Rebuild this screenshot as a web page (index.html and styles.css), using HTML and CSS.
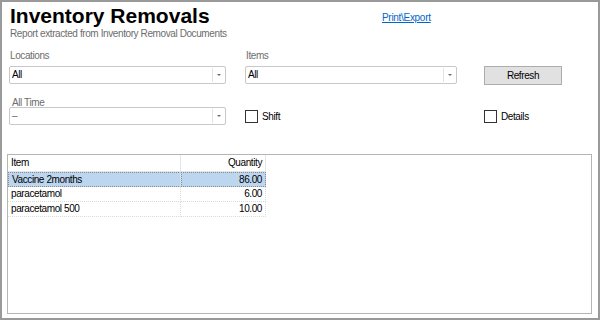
FILE: index.html
```html
<!DOCTYPE html>
<html>
<head>
<meta charset="utf-8">
<link rel="stylesheet" href="styles.css">
</head>
<body>
<div class="window">
  <div class="head">
    <div class="titles">
      <div class="title">Inventory Removals</div>
      <div class="subtitle">Report extracted from Inventory Removal Documents</div>
    </div>
    <a class="link" href="#">Print\Export</a>
  </div>
  <div class="form">
    <div class="label">Locations</div>
    <div class="label">Items</div>
    <div></div>
    <div class="combo"><span class="val">All</span><span class="arrow"><span class="tri"></span></span></div>
    <div class="combo"><span class="val">All</span><span class="arrow"><span class="tri"></span></span></div>
    <div class="button">Refresh</div>
    <div class="label label2">All Time</div>
    <div></div>
    <div></div>
    <div class="combo"><span class="val dim">–</span><span class="arrow"><span class="tri"></span></span></div>
    <div class="check"><span class="box"></span>Shift</div>
    <div class="check"><span class="box"></span>Details</div>
  </div>
  <div class="grid">
    <div class="table">
      <div class="row hdr"><div class="c1">Item</div><div class="c2">Quantity</div></div>
      <div class="row sel"><div class="c1">Vaccine 2months</div><div class="c2">86.00</div></div>
      <div class="row"><div class="c1">paracetamol</div><div class="c2">6.00</div></div>
      <div class="row"><div class="c1">paracetamol 500</div><div class="c2">10.00</div></div>
    </div>
  </div>
</div>
</body>
</html>
```
FILE: styles.css
```css
html, body { margin: 0; padding: 0; background: #fff; }
body { font-family: "Liberation Sans", Arial, sans-serif; font-size: 10px; letter-spacing: -0.4px; color: #000; }
.window {
  width: 600px; height: 320px; box-sizing: border-box;
  border: 2px solid #9a9a9a;
  padding: 0 5px 4px 5px;
  display: flex; flex-direction: column;
}
.head { display: flex; align-items: flex-start; padding-left: 3px; }
.titles { width: 372px; }
.title { font-size: 21px; font-weight: bold; line-height: 22px; margin-top: 3px; letter-spacing: 0; }
.subtitle { color: #6d6d6d; line-height: 13px; margin-top: 0px; }
.link { color: #0066cc; text-decoration: underline; line-height: 13px; margin-top: 9px; letter-spacing: -0.3px; }
.form {
  display: grid;
  grid-template-columns: 217px 212px 86px;
  column-gap: 19px;
  padding-left: 2px;
  margin-top: 9px;
}
.form > :nth-child(3n+3) { margin-left: 8px; }
.label { color: #6d6d6d; line-height: 13px; height: 17px; padding-left: 1px; }
.label2 { padding-left: 3px; margin-top: 11px; height: 11px; }
.combo {
  height: 18px; box-sizing: border-box; border: 1px solid #c8c8c8; border-radius: 2px;
  display: flex; align-items: center; background: #fff;
}
.val { flex: 1; padding-left: 2px; line-height: 14px; }
.dim { color: #6d6d6d; }
.arrow { width: 12px; height: 14px; border-left: 1px solid #e3e3e3; display: flex; align-items: center; justify-content: center; }
.tri { width: 0; height: 0; border-left: 2px solid transparent; border-right: 2px solid transparent; border-top: 2px solid #6d6d6d; }
.button {
  height: 19px; box-sizing: border-box; background: #e1e1e1; border: 1px solid #adadad;
  display: flex; align-items: center; justify-content: center;
}
.check { display: flex; align-items: center; height: 18px; margin-top: 0; }
.box { width: 11px; height: 11px; border: 1px solid #333; margin-right: 4px; background: #fff; }
.grid {
  margin-top: 29px; flex: 1; border: 1px solid #b5b5b5; margin-left: 0px; margin-right: 1px;
}
.table { width: 258px; }
.row { display: flex; height: 15px; line-height: 14px; }
.row > div { box-sizing: border-box; border-right: 1px dotted #dadada; border-bottom: 1px dotted #dadada; }
.c1 { width: 173px; padding-left: 3px; }
.c2 { width: 85px; text-align: right; padding-right: 3px; }
.hdr { height: 17px; line-height: 16px; }
.hdr > div { border-right: 1px solid #e5e5e5; border-bottom: 1px solid #e5e5e5; }
.sel { background: #bcd6ef; }
.sel > div { border: 1px dotted #8a8a8a; }
.sel .c1 { border-right: 1px dotted #f0f0f0; }
```
